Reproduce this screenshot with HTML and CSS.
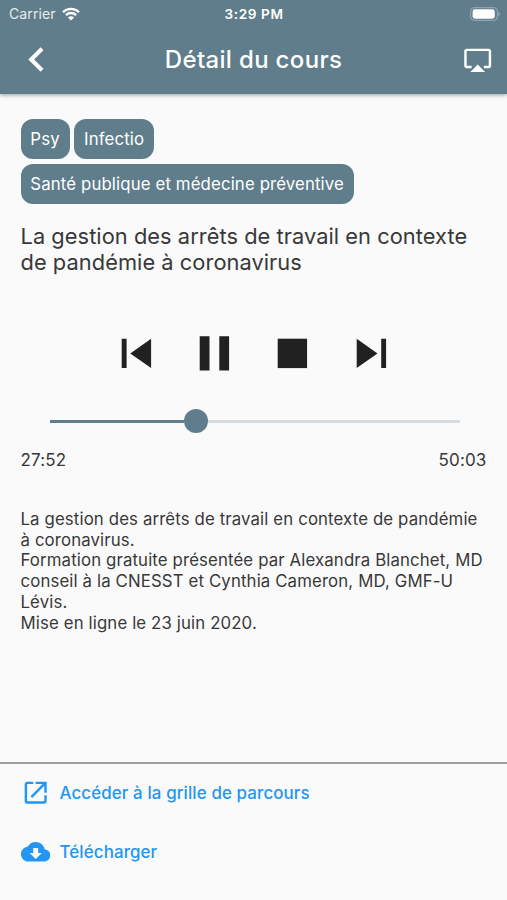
FILE: index.html
```
<!DOCTYPE html>
<html lang="fr">
<head>
  <meta charset="UTF-8" />
  <meta name="viewport" content="width=device-width, initial-scale=1.0"/>
  <title>Détail du cours</title>
  <link rel="stylesheet" href="styles.css">
</head>
<body>

  <header>
    <div class="status-bar">
      <div class="carrier">
        <span>Carrier</span>
        <svg class="wifi" viewBox="0 0 18 14">
          <path d="M1 5.2a11.4 11.4 0 0 1 16 0M3.9 8.1a7.3 7.3 0 0 1 10.2 0" fill="none" stroke="#fff" stroke-width="2.3"/>
          <path d="M9 13.6L5.9 10.5a4.4 4.4 0 0 1 6.2 0z" fill="#fff"/>
        </svg>
      </div>
      <span class="clock">3:29 PM</span>
      <svg class="battery" viewBox="0 0 30 14">
        <rect x=".6" y=".6" width="26.8" height="12.8" rx="4" fill="none" stroke="#fff" stroke-opacity=".3" stroke-width="1.2"/>
        <rect x="2.6" y="2.3" width="22.2" height="9.4" rx="2.4" fill="#fff"/>
        <path d="M28.5 4.8c1.6.7 1.6 3.7 0 4.4z" fill="#fff" fill-opacity=".4"/>
      </svg>
    </div>
    <nav>
      <svg class="back" viewBox="0 0 24 24"><path d="M15.41 7.41L14 6l-6 6 6 6 1.41-1.41L10.83 12z"/></svg>
      <h1>Détail du cours</h1>
      <svg class="airplay" viewBox="0 0 24 24"><path d="M6 22h12l-6-6zM21 3H3c-1.1 0-2 .9-2 2v12c0 1.1.9 2 2 2h4v-2H3V5h18v12h-4v2h4c1.1 0 2-.9 2-2V5c0-1.1-.9-2-2-2z"/></svg>
    </nav>
  </header>

  <main>
    <div class="tags">
      <span class="tag">Psy</span>
      <span class="tag">Infectio</span>
      <span class="tag">Santé publique et médecine préventive</span>
    </div>

    <h2>La gestion des arrêts de travail en contexte<br>de pandémie à coronavirus</h2>

    <!-- Player -->
    <div class="controls">
      <svg viewBox="0 0 24 24"><path d="M6 6h2v12H6zm3.5 6l8.5 6V6z"/></svg>
      <svg viewBox="0 0 24 24"><path d="M6 19h4V5H6v14zm8-14v14h4V5h-4z"/></svg>
      <svg viewBox="0 0 24 24"><path d="M6 6h12v12H6z"/></svg>
      <svg viewBox="0 0 24 24"><path d="M6 18l8.5-6L6 6v12zM16 6v12h2V6h-2z"/></svg>
    </div>
    <div class="slider">
      <div class="played"></div>
      <div class="thumb"></div>
      <div class="remaining"></div>
    </div>
    <div class="times">
      <span>27:52</span>
      <span>50:03</span>
    </div>

    <p class="description">
      La gestion des arrêts de travail en contexte de pandémie<br>
      à coronavirus.<br>
      Formation gratuite présentée par Alexandra Blanchet, MD<br>
      conseil à la CNESST et Cynthia Cameron, MD, GMF-U<br>
      Lévis.<br>
      Mise en ligne le 23 juin 2020.
    </p>
  </main>

  <footer>
    <a class="link-grid">
      <svg viewBox="0 0 24 24"><path d="M19 19H5V5h5V3H5c-1.11 0-2 .9-2 2v14c0 1.1.89 2 2 2h14c1.1 0 2-.9 2-2v-5h-2v5zM12 3v2h5.59l-9.83 9.83 1.41 1.41L19 6.41V12h2V3h-9z"/></svg>
      <span>Accéder à la grille de parcours</span>
    </a>
    <a class="link-download">
      <svg viewBox="0 0 24 24"><path d="M19.35 10.04C18.67 6.59 15.64 4 12 4 9.11 4 6.6 5.64 5.35 8.04 2.34 8.36 0 10.91 0 14c0 3.31 2.69 6 6 6h13c2.76 0 5-2.24 5-5 0-2.64-2.05-4.78-4.65-4.96zM17 13l-5 5-5-5h3V9h4v4h3z"/></svg>
      <span>Télécharger</span>
    </a>
  </footer>

</body>
</html>
```
FILE: styles.css
```
* {
  margin: 0;
  padding: 0;
  box-sizing: border-box;
}

body {
  font-family: "Inter", sans-serif;
  background-color: #fafafa;
  color: #383838;
  display: flex;
  flex-direction: column;
  height: 900px;
  overflow: hidden;
}

svg {
  display: block;
  flex-shrink: 0;
}

header {
  height: 94px;
  background-color: #607d8b;
  color: #fff;
  box-shadow: 0 1px 4px rgba(0, 0, 0, 0.4);
}

.status-bar {
  display: grid;
  grid-template-columns: 1fr auto 1fr;
  align-items: center;
  height: 27px;
  padding: 0 7px 0 9px;
}

.carrier {
  display: flex;
  align-items: center;
  gap: 6px;
  font-size: 14px;
  letter-spacing: 0.1px;
  color: #e6ebee;
}

.wifi {
  width: 18px;
  height: 14px;
}

.clock {
  font-size: 13.6px;
  font-weight: 600;
  letter-spacing: 0.6px;
  margin-right: 1px;
}

.battery {
  width: 30px;
  height: 14px;
  justify-self: end;
}

nav {
  display: flex;
  align-items: center;
  justify-content: space-between;
  height: 65px;
  padding: 0 15px 0 11.5px;
}

nav svg {
  fill: #fff;
}

.back {
  width: 49px;
  height: 49px;
}

.airplay {
  width: 29.4px;
  height: 29.4px;
}

h1 {
  font-size: 24px;
  font-weight: 500;
  letter-spacing: 0.33px;
  margin-left: -16px;
}

main {
  flex: 1;
  padding: 24.5px 20.5px 0;
}

.tags {
  display: flex;
  flex-wrap: wrap;
  gap: 5px 4.8px;
}

.tag {
  height: 40.2px;
  line-height: 40px;
  padding: 0 9.8px;
  border-radius: 12px;
  background-color: #607d8b;
  color: #fff;
  font-size: 16.8px;
  letter-spacing: 0.13px;
}

h2 {
  margin-top: 20.3px;
  font-size: 21.8px;
  font-weight: 400;
  letter-spacing: 0.06px;
  line-height: 25.7px;
  white-space: nowrap;
}

.controls {
  display: flex;
  justify-content: center;
  gap: 19.4px;
  margin: 48.1px 0 0 0.6px;
}

.controls svg {
  width: 58.8px;
  height: 58.8px;
  fill: #212121;
}

.slider {
  display: flex;
  align-items: center;
  height: 24px;
  margin: 26.7px 27px 0 29.5px;
}

.played {
  width: 133.6px;
  height: 3px;
  background-color: #607d8b;
}

.thumb {
  width: 24.5px;
  height: 24.5px;
  border-radius: 50%;
  background-color: #607d8b;
}

.remaining {
  flex: 1;
  height: 3px;
  background-color: #d6dcdf;
}

.times {
  display: flex;
  justify-content: space-between;
  margin-top: 17px;
  line-height: 21px;
  font-size: 17px;
  letter-spacing: 0.15px;
}

.description {
  margin-top: 37.6px;
  font-size: 16.8px;
  letter-spacing: 0.13px;
  line-height: 20.75px;
  white-space: nowrap;
}

footer {
  height: 138px;
  padding: 13.6px 20.5px 0;
  border-top: 2px solid #a0a0a0;
}

footer a {
  display: flex;
  align-items: center;
  gap: 9.6px;
  height: 30px;
  color: #2196f3;
  font-size: 16.9px;
  font-weight: 500;
  letter-spacing: 0.12px;
}

footer svg {
  width: 29.4px;
  height: 29.4px;
  fill: #2196f3;
}

.link-download {
  margin-top: 29px;
}
```
